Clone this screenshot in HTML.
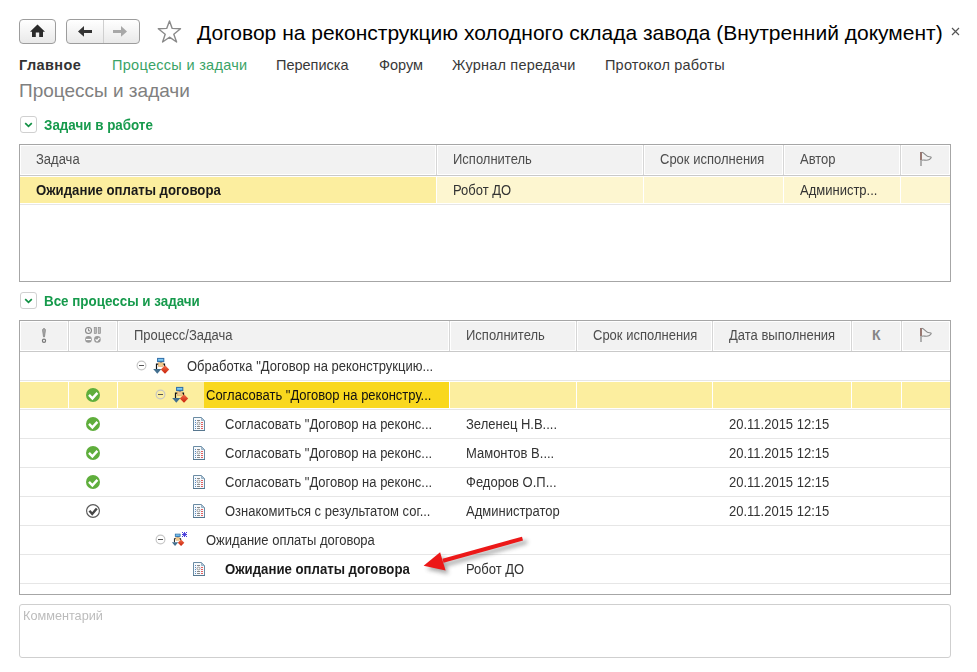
<!DOCTYPE html>
<html><head><meta charset="utf-8">
<style>
html,body{margin:0;padding:0;background:#fff;width:977px;height:672px;overflow:hidden;position:relative;font-family:"Liberation Sans",sans-serif;}
.a{position:absolute;}
.t{position:absolute;white-space:nowrap;font-size:13px;line-height:13px;color:#333;}
.btn{position:absolute;box-sizing:border-box;border:1px solid #9d9d9d;border-radius:4px;background:linear-gradient(#fff,#e9e9e9);}
svg{position:absolute;overflow:visible;}
</style></head>
<body>

<div class="btn" style="left:19px;top:19px;width:37px;height:25px;"></div>
<div class="btn" style="left:66px;top:19px;width:74px;height:25px;"></div>
<div class="a" style="left:103px;top:20px;width:1px;height:23px;background:#cfcfcf;"></div>
<svg style="left:0;top:0" width="977" height="60">
  <path d="M37.5 24.5 L45 31.8 L43 31.8 L43 37 L39.2 37 L39.2 32.6 L35.8 32.6 L35.8 37 L32 37 L32 31.8 L30 31.8 Z" fill="#2b2b2b"/>
  <path d="M78 31.4 L84 26 L84 30 L92 30 L92 33 L84 33 L84 36.8 Z" fill="#333"/>
  <path d="M127 31.4 L121 26 L121 30 L113 30 L113 33 L121 33 L121 36.8 Z" fill="#a8a8a8"/>
  <path d="M169.5 21 L172.2 28.4 L180.5 28.8 L173.8 34.2 L176.6 42 L169.5 37.2 L162.6 42 L165.2 34.2 L158.3 28.8 L166.7 28.4 Z" fill="none" stroke="#8a8a8a" stroke-width="1.4" stroke-linejoin="round"/>
  <path d="M952 28 L959 35 M959 28 L952 35" stroke="#555" stroke-width="1.2"/>
</svg>
<div class="t" style="left:197px;top:22.41px;font-size:21px;line-height:21px;color:#000;">Договор на реконструкцию холодного склада завода (Внутренний документ)</div>
<div class="t" style="left:19px;top:57.72px;font-size:14.5px;line-height:14.5px;color:#333;font-weight:bold;letter-spacing:0.4px;">Главное</div>
<div class="t" style="left:112px;top:57.72px;font-size:14.5px;line-height:14.5px;color:#3aa366;letter-spacing:0.3px;">Процессы и задачи</div>
<div class="t" style="left:276px;top:57.72px;font-size:14.5px;line-height:14.5px;color:#383838;">Переписка</div>
<div class="t" style="left:379px;top:57.72px;font-size:14.5px;line-height:14.5px;color:#383838;">Форум</div>
<div class="t" style="left:452px;top:57.72px;font-size:14.5px;line-height:14.5px;color:#383838;letter-spacing:0.2px;">Журнал передачи</div>
<div class="t" style="left:605px;top:57.72px;font-size:14.5px;line-height:14.5px;color:#383838;letter-spacing:0.2px;">Протокол работы</div>
<div class="t" style="left:19px;top:81.21px;font-size:19px;line-height:19px;color:#808080;">Процессы и задачи</div>
<div class="a" style="left:20px;top:116px;width:17px;height:17px;box-sizing:border-box;border:1px solid #d0d0d0;border-radius:3px;"></div>
<svg style="left:0;top:0" width="10" height="10"><path d="M25.2 123.2 L28.5 126.3 L31.8 123.2" fill="none" stroke="#119044" stroke-width="1.7"/></svg>
<div class="t" style="left:44px;top:118.65px;font-size:13.4px;line-height:13.4px;color:#169a4c;font-weight:bold;transform:scaleY(1.07);transform-origin:0 84.7%;">Задачи в работе</div>
<div class="a" style="left:20px;top:292px;width:17px;height:17px;box-sizing:border-box;border:1px solid #d0d0d0;border-radius:3px;"></div>
<svg style="left:0;top:0" width="10" height="10"><path d="M25.2 299.2 L28.5 302.3 L31.8 299.2" fill="none" stroke="#119044" stroke-width="1.7"/></svg>
<div class="t" style="left:44px;top:294.65px;font-size:13.4px;line-height:13.4px;color:#169a4c;font-weight:bold;transform:scaleY(1.07);transform-origin:0 84.7%;">Все процессы и задачи</div>
<div class="a" style="left:19px;top:144px;width:932px;height:138px;box-sizing:border-box;border:1px solid #a6a6a6;"></div>
<div class="a" style="left:21px;top:146px;width:414px;height:28px;background:#f2f2f2;"></div>
<div class="a" style="left:438px;top:146px;width:204px;height:28px;background:#f2f2f2;"></div>
<div class="a" style="left:645px;top:146px;width:137px;height:28px;background:#f2f2f2;"></div>
<div class="a" style="left:785px;top:146px;width:114px;height:28px;background:#f2f2f2;"></div>
<div class="a" style="left:902px;top:146px;width:47px;height:28px;background:#f2f2f2;"></div>
<div class="a" style="left:436px;top:145px;width:1px;height:30px;background:#d6d6d6;"></div>
<div class="a" style="left:643px;top:145px;width:1px;height:30px;background:#d6d6d6;"></div>
<div class="a" style="left:783px;top:145px;width:1px;height:30px;background:#d6d6d6;"></div>
<div class="a" style="left:900px;top:145px;width:1px;height:30px;background:#d6d6d6;"></div>
<div class="a" style="left:20px;top:175px;width:930px;height:1px;background:#c9c9c9;"></div>
<div class="a" style="left:20px;top:177px;width:416px;height:26px;background:#fcee9f;"></div>
<div class="a" style="left:437px;top:177px;width:206px;height:26px;background:#fdf6d0;"></div>
<div class="a" style="left:644px;top:177px;width:139px;height:26px;background:#fdf6d0;"></div>
<div class="a" style="left:784px;top:177px;width:116px;height:26px;background:#fdf6d0;"></div>
<div class="a" style="left:901px;top:177px;width:49px;height:26px;background:#fdf6d0;"></div>
<div class="a" style="left:20px;top:204px;width:930px;height:1px;background:#e6e6e6;"></div>
<div class="t" style="left:36px;top:152.79px;font-size:13px;line-height:13px;color:#4d4d4d;transform:scaleY(1.07);transform-origin:0 84.7%;">Задача</div>
<div class="t" style="left:453px;top:152.79px;font-size:13px;line-height:13px;color:#4d4d4d;transform:scaleY(1.07);transform-origin:0 84.7%;">Исполнитель</div>
<div class="t" style="left:660px;top:152.79px;font-size:13px;line-height:13px;color:#4d4d4d;transform:scaleY(1.07);transform-origin:0 84.7%;">Срок исполнения</div>
<div class="t" style="left:800px;top:152.79px;font-size:13px;line-height:13px;color:#4d4d4d;transform:scaleY(1.07);transform-origin:0 84.7%;">Автор</div>
<div class="t" style="left:36px;top:183.62px;font-size:13.2px;line-height:13.2px;color:#1a1a1a;font-weight:bold;transform:scaleY(1.07);transform-origin:0 84.7%;">Ожидание оплаты договора</div>
<div class="t" style="left:453px;top:183.79px;font-size:13px;line-height:13px;color:#333;transform:scaleY(1.07);transform-origin:0 84.7%;">Робот ДО</div>
<div class="t" style="left:800px;top:183.79px;font-size:13px;line-height:13px;color:#333;transform:scaleY(1.07);transform-origin:0 84.7%;">Администр...</div>
<svg style="left:0;top:0" width="10" height="10">
<path d="M921.0 152 L921.0 166" stroke="#8a8a8a" stroke-width="1.3"/>
<path d="M921.0 152 L921.0 160" stroke="#8b5a50" stroke-width="1.3"/>
<path d="M921.8 152.3 C924.3 152.5 926.3 157 929.3 156.8 C932.3 156.6 931.3 158 929.3 159.5 C926.8 161 924.3 159.6 921.8 160.2" fill="none" stroke="#8a8a8a" stroke-width="1.1"/>
</svg>
<div class="a" style="left:19px;top:320px;width:932px;height:275px;box-sizing:border-box;border:1px solid #a6a6a6;"></div>
<div class="a" style="left:21px;top:322px;width:46px;height:28px;background:#f2f2f2;"></div>
<div class="a" style="left:70px;top:322px;width:46px;height:28px;background:#f2f2f2;"></div>
<div class="a" style="left:119px;top:322px;width:329px;height:28px;background:#f2f2f2;"></div>
<div class="a" style="left:451px;top:322px;width:124px;height:28px;background:#f2f2f2;"></div>
<div class="a" style="left:578px;top:322px;width:133px;height:28px;background:#f2f2f2;"></div>
<div class="a" style="left:714px;top:322px;width:136px;height:28px;background:#f2f2f2;"></div>
<div class="a" style="left:853px;top:322px;width:47px;height:28px;background:#f2f2f2;"></div>
<div class="a" style="left:903px;top:322px;width:46px;height:28px;background:#f2f2f2;"></div>
<div class="a" style="left:68px;top:321px;width:1px;height:30px;background:#d6d6d6;"></div>
<div class="a" style="left:117px;top:321px;width:1px;height:30px;background:#d6d6d6;"></div>
<div class="a" style="left:449px;top:321px;width:1px;height:30px;background:#d6d6d6;"></div>
<div class="a" style="left:576px;top:321px;width:1px;height:30px;background:#d6d6d6;"></div>
<div class="a" style="left:712px;top:321px;width:1px;height:30px;background:#d6d6d6;"></div>
<div class="a" style="left:851px;top:321px;width:1px;height:30px;background:#d6d6d6;"></div>
<div class="a" style="left:901px;top:321px;width:1px;height:30px;background:#d6d6d6;"></div>
<div class="a" style="left:20px;top:351px;width:930px;height:1px;background:#c9c9c9;"></div>
<div class="t" style="left:134px;top:328.99px;font-size:13px;line-height:13px;color:#4d4d4d;transform:scaleY(1.07);transform-origin:0 84.7%;">Процесс/Задача</div>
<div class="t" style="left:466px;top:328.99px;font-size:13px;line-height:13px;color:#4d4d4d;transform:scaleY(1.07);transform-origin:0 84.7%;">Исполнитель</div>
<div class="t" style="left:593px;top:328.99px;font-size:13px;line-height:13px;color:#4d4d4d;transform:scaleY(1.07);transform-origin:0 84.7%;">Срок исполнения</div>
<div class="t" style="left:729px;top:328.99px;font-size:13px;line-height:13px;color:#4d4d4d;transform:scaleY(1.07);transform-origin:0 84.7%;">Дата выполнения</div>
<div class="t" style="left:872px;top:328.14px;font-size:14px;line-height:14px;color:#858585;font-weight:bold;">К</div>
<svg style="left:0;top:0" width="10" height="10">
<path d="M921.0 328 L921.0 342" stroke="#8a8a8a" stroke-width="1.3"/>
<path d="M921.0 328 L921.0 336" stroke="#8b5a50" stroke-width="1.3"/>
<path d="M921.8 328.3 C924.3 328.5 926.3 333 929.3 332.8 C932.3 332.6 931.3 334 929.3 335.5 C926.8 337 924.3 335.6 921.8 336.2" fill="none" stroke="#8a8a8a" stroke-width="1.1"/>
</svg>
<div class="a" style="left:20px;top:380px;width:930px;height:1px;background:#e6e6e6;"></div>
<div class="a" style="left:20px;top:409px;width:930px;height:1px;background:#e6e6e6;"></div>
<div class="a" style="left:20px;top:438px;width:930px;height:1px;background:#e6e6e6;"></div>
<div class="a" style="left:20px;top:467px;width:930px;height:1px;background:#e6e6e6;"></div>
<div class="a" style="left:20px;top:496px;width:930px;height:1px;background:#e6e6e6;"></div>
<div class="a" style="left:20px;top:525px;width:930px;height:1px;background:#e6e6e6;"></div>
<div class="a" style="left:20px;top:554px;width:930px;height:1px;background:#e6e6e6;"></div>
<div class="a" style="left:20px;top:583px;width:930px;height:1px;background:#e6e6e6;"></div>
<div class="a" style="left:20px;top:382px;width:48px;height:26px;background:#fcee9f;"></div>
<div class="a" style="left:69px;top:382px;width:48px;height:26px;background:#fcee9f;"></div>
<div class="a" style="left:118px;top:382px;width:331px;height:26px;background:#fcee9f;"></div>
<div class="a" style="left:450px;top:382px;width:126px;height:26px;background:#fcee9f;"></div>
<div class="a" style="left:577px;top:382px;width:135px;height:26px;background:#fcee9f;"></div>
<div class="a" style="left:713px;top:382px;width:138px;height:26px;background:#fcee9f;"></div>
<div class="a" style="left:852px;top:382px;width:49px;height:26px;background:#fcee9f;"></div>
<div class="a" style="left:902px;top:382px;width:48px;height:26px;background:#fcee9f;"></div>
<div class="a" style="left:204px;top:382px;width:245px;height:26px;background:#f9d81e;"></div>
<svg style="left:0;top:0" width="10" height="10">
<path d="M44 328.6 C42.7 328.6 42.5 329.5 42.7 331 L43.5 336.8 L44.5 336.8 L45.3 331 C45.5 329.5 45.3 328.6 44 328.6 Z" fill="#aaa" stroke="#777" stroke-width="0.7"/>
<circle cx="44" cy="340.8" r="1.6" fill="none" stroke="#777" stroke-width="1.2"/>
<circle cx="88.5" cy="330.5" r="3" fill="none" stroke="#888" stroke-width="1.1"/>
<path d="M88.5 328.5 L88.5 330.8 L90 330.8" fill="none" stroke="#888" stroke-width="1"/>
<rect x="94.2" y="327.4" width="2.4" height="6.2" fill="#bbb" stroke="#888" stroke-width="0.6"/>
<rect x="98.2" y="327.4" width="2.4" height="6.2" fill="#bbb" stroke="#888" stroke-width="0.6"/>
<circle cx="88.5" cy="339.4" r="3.3" fill="#999"/>
<rect x="86" y="338.9" width="5" height="1.2" fill="#fff"/>
<circle cx="97.4" cy="339.4" r="3.3" fill="#999"/>
<path d="M95.6 339.3 L97 340.8 L99.4 338" fill="none" stroke="#fff" stroke-width="1.2"/>
</svg>
<svg style="left:0;top:0" width="10" height="10"><circle cx="141.5" cy="365.5" r="4.4" fill="none" stroke="#c6c6c6" stroke-width="1.15"/><rect x="139.0" y="365.0" width="5" height="1" fill="#555"/></svg>
<svg style="left:0;top:0" width="10" height="10"><defs>
<linearGradient id="rd" x1="0" y1="0" x2="0" y2="1"><stop offset="0" stop-color="#f0704a"/><stop offset="1" stop-color="#c81e08"/></linearGradient>
<linearGradient id="bl" x1="0" y1="0" x2="0" y2="1"><stop offset="0" stop-color="#9ad8fa"/><stop offset="1" stop-color="#4aa8e0"/></linearGradient>
</defs><g transform="translate(153,357.5) scale(1.0)">
<path d="M3.5 11.5 L3.5 6.6 L11.5 6.6 L11.5 9" fill="none" stroke="#111" stroke-width="1.2"/>
<rect x="4.6" y="0.9" width="6.2" height="3.2" fill="url(#bl)" stroke="#2c6aa6" stroke-width="1"/>
<rect x="6.8" y="4.3" width="2.2" height="1.2" fill="#2c6aa6"/>
<rect x="5.3" y="5.3" width="4.8" height="3.6" fill="#f1c88e" stroke="#d8a868" stroke-width="0.6"/>
<path d="M0.2 11.4 L8.4 11.4 L4.3 16.3 Z" fill="#426f8f"/>
<path d="M12 7.8 L16.2 12 L12 16.3 L7.8 12 Z" fill="url(#rd)"/>
</g></svg>
<div class="t" style="left:187px;top:359.99px;font-size:13px;line-height:13px;color:#333;transform:scaleY(1.07);transform-origin:0 84.7%;">Обработка "Договор на реконструкцию...</div>
<svg style="left:0;top:0" width="10" height="10"><circle cx="93" cy="395" r="7" fill="#5fae3c"/><path d="M89 394.9 L92.4 398.4 L97.4 392.9" fill="none" stroke="#fff" stroke-width="2.4"/></svg>
<svg style="left:0;top:0" width="10" height="10"><circle cx="160.5" cy="394.5" r="4.4" fill="none" stroke="#c6c6c6" stroke-width="1.15"/><rect x="158.0" y="394.0" width="5" height="1" fill="#555"/></svg>
<svg style="left:0;top:0" width="10" height="10"><defs>
<linearGradient id="rd" x1="0" y1="0" x2="0" y2="1"><stop offset="0" stop-color="#f0704a"/><stop offset="1" stop-color="#c81e08"/></linearGradient>
<linearGradient id="bl" x1="0" y1="0" x2="0" y2="1"><stop offset="0" stop-color="#9ad8fa"/><stop offset="1" stop-color="#4aa8e0"/></linearGradient>
</defs><g transform="translate(172,386.5) scale(1.0)">
<path d="M3.5 11.5 L3.5 6.6 L11.5 6.6 L11.5 9" fill="none" stroke="#111" stroke-width="1.2"/>
<rect x="4.6" y="0.9" width="6.2" height="3.2" fill="url(#bl)" stroke="#2c6aa6" stroke-width="1"/>
<rect x="6.8" y="4.3" width="2.2" height="1.2" fill="#2c6aa6"/>
<rect x="5.3" y="5.3" width="4.8" height="3.6" fill="#f1c88e" stroke="#d8a868" stroke-width="0.6"/>
<path d="M0.2 11.4 L8.4 11.4 L4.3 16.3 Z" fill="#426f8f"/>
<path d="M12 7.8 L16.2 12 L12 16.3 L7.8 12 Z" fill="url(#rd)"/>
</g></svg>
<div class="t" style="left:206px;top:388.99px;font-size:13px;line-height:13px;color:#111;transform:scaleY(1.07);transform-origin:0 84.7%;">Согласовать "Договор на реконстру...</div>
<svg style="left:0;top:0" width="10" height="10"><circle cx="93" cy="424" r="7" fill="#5fae3c"/><path d="M89 423.9 L92.4 427.4 L97.4 421.9" fill="none" stroke="#fff" stroke-width="2.4"/></svg>
<svg style="left:0;top:0" width="10" height="10">
<path d="M193.5 417.5 L201.5 417.5 L204.5 420.5 L204.5 430.5 L193.5 430.5 Z" fill="#f6f9fc" stroke="#6a8ba3" stroke-width="1"/>
<rect x="193" y="430" width="12" height="1" fill="#57778f"/>
<path d="M201.5 417.8 L201.5 420.5 L204.2 420.5 Z" fill="#b8cfe0" stroke="#8aa6bb" stroke-width="0.8"/>
<rect x="195" y="420" width="1" height="1" fill="#5a8ac0"/><rect x="197" y="420" width="3" height="1" fill="#888"/><rect x="195" y="422" width="1" height="1" fill="#5a8ac0"/><rect x="201" y="422" width="2" height="1" fill="#e06060"/><rect x="195" y="424" width="1" height="1" fill="#5a8ac0"/><rect x="201" y="424" width="2" height="1" fill="#e06060"/><rect x="195" y="426" width="1" height="1" fill="#5a8ac0"/><rect x="197" y="426" width="3" height="1" fill="#888"/><rect x="201" y="426" width="2" height="1" fill="#e06060"/><rect x="195" y="428" width="1" height="1" fill="#5a8ac0"/><rect x="197" y="428" width="3" height="1" fill="#888"/><rect x="201" y="428" width="2" height="1" fill="#e06060"/><circle cx="198.5" cy="423.5" r="1.4" fill="none" stroke="#999" stroke-width="1"/>
</svg>
<div class="t" style="left:225px;top:417.99px;font-size:13px;line-height:13px;color:#333;transform:scaleY(1.07);transform-origin:0 84.7%;">Согласовать "Договор на реконс...</div>
<div class="t" style="left:466px;top:417.99px;font-size:13px;line-height:13px;color:#333;transform:scaleY(1.07);transform-origin:0 84.7%;">Зеленец Н.В....</div>
<div class="t" style="left:729px;top:417.99px;font-size:13px;line-height:13px;color:#333;transform:scaleY(1.07);transform-origin:0 84.7%;">20.11.2015 12:15</div>
<svg style="left:0;top:0" width="10" height="10"><circle cx="93" cy="453" r="7" fill="#5fae3c"/><path d="M89 452.9 L92.4 456.4 L97.4 450.9" fill="none" stroke="#fff" stroke-width="2.4"/></svg>
<svg style="left:0;top:0" width="10" height="10">
<path d="M193.5 446.5 L201.5 446.5 L204.5 449.5 L204.5 459.5 L193.5 459.5 Z" fill="#f6f9fc" stroke="#6a8ba3" stroke-width="1"/>
<rect x="193" y="459" width="12" height="1" fill="#57778f"/>
<path d="M201.5 446.8 L201.5 449.5 L204.2 449.5 Z" fill="#b8cfe0" stroke="#8aa6bb" stroke-width="0.8"/>
<rect x="195" y="449" width="1" height="1" fill="#5a8ac0"/><rect x="197" y="449" width="3" height="1" fill="#888"/><rect x="195" y="451" width="1" height="1" fill="#5a8ac0"/><rect x="201" y="451" width="2" height="1" fill="#e06060"/><rect x="195" y="453" width="1" height="1" fill="#5a8ac0"/><rect x="201" y="453" width="2" height="1" fill="#e06060"/><rect x="195" y="455" width="1" height="1" fill="#5a8ac0"/><rect x="197" y="455" width="3" height="1" fill="#888"/><rect x="201" y="455" width="2" height="1" fill="#e06060"/><rect x="195" y="457" width="1" height="1" fill="#5a8ac0"/><rect x="197" y="457" width="3" height="1" fill="#888"/><rect x="201" y="457" width="2" height="1" fill="#e06060"/><circle cx="198.5" cy="452.5" r="1.4" fill="none" stroke="#999" stroke-width="1"/>
</svg>
<div class="t" style="left:225px;top:446.99px;font-size:13px;line-height:13px;color:#333;transform:scaleY(1.07);transform-origin:0 84.7%;">Согласовать "Договор на реконс...</div>
<div class="t" style="left:466px;top:446.99px;font-size:13px;line-height:13px;color:#333;transform:scaleY(1.07);transform-origin:0 84.7%;">Мамонтов В....</div>
<div class="t" style="left:729px;top:446.99px;font-size:13px;line-height:13px;color:#333;transform:scaleY(1.07);transform-origin:0 84.7%;">20.11.2015 12:15</div>
<svg style="left:0;top:0" width="10" height="10"><circle cx="93" cy="482" r="7" fill="#5fae3c"/><path d="M89 481.9 L92.4 485.4 L97.4 479.9" fill="none" stroke="#fff" stroke-width="2.4"/></svg>
<svg style="left:0;top:0" width="10" height="10">
<path d="M193.5 475.5 L201.5 475.5 L204.5 478.5 L204.5 488.5 L193.5 488.5 Z" fill="#f6f9fc" stroke="#6a8ba3" stroke-width="1"/>
<rect x="193" y="488" width="12" height="1" fill="#57778f"/>
<path d="M201.5 475.8 L201.5 478.5 L204.2 478.5 Z" fill="#b8cfe0" stroke="#8aa6bb" stroke-width="0.8"/>
<rect x="195" y="478" width="1" height="1" fill="#5a8ac0"/><rect x="197" y="478" width="3" height="1" fill="#888"/><rect x="195" y="480" width="1" height="1" fill="#5a8ac0"/><rect x="201" y="480" width="2" height="1" fill="#e06060"/><rect x="195" y="482" width="1" height="1" fill="#5a8ac0"/><rect x="201" y="482" width="2" height="1" fill="#e06060"/><rect x="195" y="484" width="1" height="1" fill="#5a8ac0"/><rect x="197" y="484" width="3" height="1" fill="#888"/><rect x="201" y="484" width="2" height="1" fill="#e06060"/><rect x="195" y="486" width="1" height="1" fill="#5a8ac0"/><rect x="197" y="486" width="3" height="1" fill="#888"/><rect x="201" y="486" width="2" height="1" fill="#e06060"/><circle cx="198.5" cy="481.5" r="1.4" fill="none" stroke="#999" stroke-width="1"/>
</svg>
<div class="t" style="left:225px;top:475.99px;font-size:13px;line-height:13px;color:#333;transform:scaleY(1.07);transform-origin:0 84.7%;">Согласовать "Договор на реконс...</div>
<div class="t" style="left:466px;top:475.99px;font-size:13px;line-height:13px;color:#333;transform:scaleY(1.07);transform-origin:0 84.7%;">Федоров О.П...</div>
<div class="t" style="left:729px;top:475.99px;font-size:13px;line-height:13px;color:#333;transform:scaleY(1.07);transform-origin:0 84.7%;">20.11.2015 12:15</div>
<svg style="left:0;top:0" width="10" height="10"><circle cx="93" cy="511" r="6.4" fill="#fff" stroke="#5a5a5a" stroke-width="1.15"/><path d="M89.4 510.8 L92.2 513.9 L96.8 508.4" fill="none" stroke="#444" stroke-width="2.4"/></svg>
<svg style="left:0;top:0" width="10" height="10">
<path d="M193.5 504.5 L201.5 504.5 L204.5 507.5 L204.5 517.5 L193.5 517.5 Z" fill="#f6f9fc" stroke="#6a8ba3" stroke-width="1"/>
<rect x="193" y="517" width="12" height="1" fill="#57778f"/>
<path d="M201.5 504.8 L201.5 507.5 L204.2 507.5 Z" fill="#b8cfe0" stroke="#8aa6bb" stroke-width="0.8"/>
<rect x="195" y="507" width="1" height="1" fill="#5a8ac0"/><rect x="197" y="507" width="3" height="1" fill="#888"/><rect x="195" y="509" width="1" height="1" fill="#5a8ac0"/><rect x="201" y="509" width="2" height="1" fill="#e06060"/><rect x="195" y="511" width="1" height="1" fill="#5a8ac0"/><rect x="201" y="511" width="2" height="1" fill="#e06060"/><rect x="195" y="513" width="1" height="1" fill="#5a8ac0"/><rect x="197" y="513" width="3" height="1" fill="#888"/><rect x="201" y="513" width="2" height="1" fill="#e06060"/><rect x="195" y="515" width="1" height="1" fill="#5a8ac0"/><rect x="197" y="515" width="3" height="1" fill="#888"/><rect x="201" y="515" width="2" height="1" fill="#e06060"/><circle cx="198.5" cy="510.5" r="1.4" fill="none" stroke="#999" stroke-width="1"/>
</svg>
<div class="t" style="left:225px;top:504.99px;font-size:13px;line-height:13px;color:#333;transform:scaleY(1.07);transform-origin:0 84.7%;">Ознакомиться с результатом сог...</div>
<div class="t" style="left:466px;top:504.99px;font-size:13px;line-height:13px;color:#333;transform:scaleY(1.07);transform-origin:0 84.7%;">Администратор</div>
<div class="t" style="left:729px;top:504.99px;font-size:13px;line-height:13px;color:#333;transform:scaleY(1.07);transform-origin:0 84.7%;">20.11.2015 12:15</div>
<svg style="left:0;top:0" width="10" height="10"><circle cx="160.5" cy="539.5" r="4.4" fill="none" stroke="#c6c6c6" stroke-width="1.15"/><rect x="158.0" y="539.0" width="5" height="1" fill="#555"/></svg>
<svg style="left:0;top:0" width="10" height="10"><defs>
<linearGradient id="rd" x1="0" y1="0" x2="0" y2="1"><stop offset="0" stop-color="#f0704a"/><stop offset="1" stop-color="#c81e08"/></linearGradient>
<linearGradient id="bl" x1="0" y1="0" x2="0" y2="1"><stop offset="0" stop-color="#9ad8fa"/><stop offset="1" stop-color="#4aa8e0"/></linearGradient>
</defs><g transform="translate(171.7,533.4) scale(0.78)">
<path d="M3.5 11.5 L3.5 6.6 L11.5 6.6 L11.5 9" fill="none" stroke="#111" stroke-width="1.2"/>
<rect x="4.6" y="0.9" width="6.2" height="3.2" fill="url(#bl)" stroke="#2c6aa6" stroke-width="1"/>
<rect x="6.8" y="4.3" width="2.2" height="1.2" fill="#2c6aa6"/>
<rect x="5.3" y="5.3" width="4.8" height="3.6" fill="#f1c88e" stroke="#d8a868" stroke-width="0.6"/>
<path d="M0.2 11.4 L8.4 11.4 L4.3 16.3 Z" fill="#426f8f"/>
<path d="M12 7.8 L16.2 12 L12 16.3 L7.8 12 Z" fill="url(#rd)"/>
</g></svg>
<svg style="left:0;top:0" width="10" height="10"><g fill="#4a3fd8">
<rect x="182" y="532" width="1" height="1"/><rect x="184" y="532" width="1" height="1"/><rect x="186" y="532" width="1" height="1"/>
<rect x="183" y="533" width="3" height="3" fill="#6a60e8"/><rect x="184" y="533" width="1" height="3"/><rect x="183" y="534" width="3" height="1"/>
<rect x="182" y="534" width="1" height="1"/><rect x="186" y="534" width="1" height="1"/>
<rect x="182" y="536" width="1" height="1"/><rect x="184" y="536" width="1" height="1"/><rect x="186" y="536" width="1" height="1"/>
</g></svg>
<div class="t" style="left:206px;top:533.99px;font-size:13px;line-height:13px;color:#333;transform:scaleY(1.07);transform-origin:0 84.7%;">Ожидание оплаты договора</div>
<svg style="left:0;top:0" width="10" height="10">
<path d="M193.5 562.5 L201.5 562.5 L204.5 565.5 L204.5 575.5 L193.5 575.5 Z" fill="#f6f9fc" stroke="#6a8ba3" stroke-width="1"/>
<rect x="193" y="575" width="12" height="1" fill="#57778f"/>
<path d="M201.5 562.8 L201.5 565.5 L204.2 565.5 Z" fill="#b8cfe0" stroke="#8aa6bb" stroke-width="0.8"/>
<rect x="195" y="565" width="1" height="1" fill="#5a8ac0"/><rect x="197" y="565" width="3" height="1" fill="#888"/><rect x="195" y="567" width="1" height="1" fill="#5a8ac0"/><rect x="201" y="567" width="2" height="1" fill="#e06060"/><rect x="195" y="569" width="1" height="1" fill="#5a8ac0"/><rect x="201" y="569" width="2" height="1" fill="#e06060"/><rect x="195" y="571" width="1" height="1" fill="#5a8ac0"/><rect x="197" y="571" width="3" height="1" fill="#888"/><rect x="201" y="571" width="2" height="1" fill="#e06060"/><rect x="195" y="573" width="1" height="1" fill="#5a8ac0"/><rect x="197" y="573" width="3" height="1" fill="#888"/><rect x="201" y="573" width="2" height="1" fill="#e06060"/><circle cx="198.5" cy="568.5" r="1.4" fill="none" stroke="#999" stroke-width="1"/>
</svg>
<div class="t" style="left:225px;top:562.82px;font-size:13.2px;line-height:13.2px;color:#1a1a1a;font-weight:bold;transform:scaleY(1.07);transform-origin:0 84.7%;">Ожидание оплаты договора</div>
<div class="t" style="left:466px;top:562.99px;font-size:13px;line-height:13px;color:#333;transform:scaleY(1.07);transform-origin:0 84.7%;">Робот ДО</div>
<svg style="left:0;top:0" width="977" height="672">
<defs><filter id="sh" x="-20%" y="-50%" width="140%" height="200%"><feGaussianBlur stdDeviation="2"/></filter></defs>
<g transform="translate(3,3.5)" opacity="0.42" filter="url(#sh)">
<path d="M522.5 538.6 L443 560.8" stroke="#333" stroke-width="4" stroke-linecap="round"/>
<path d="M423.6 565.8 L440.1 552.2 L445.6 570.6 Z" fill="#333"/>
</g>
<path d="M522.5 538.6 L443 560.8" stroke="#ec1818" stroke-width="4" stroke-linecap="butt"/>
<path d="M423.6 565.8 L440.1 552.2 L445.6 570.6 Z" fill="#ec1818"/>
</svg>
<div class="a" style="left:19px;top:604px;width:932px;height:54px;box-sizing:border-box;border:1px solid #cfcfcf;border-radius:3px;"></div>
<div class="t" style="left:23px;top:610.24px;font-size:12.7px;line-height:12.7px;color:#bcbcbc;transform:scaleY(1.07);transform-origin:0 84.7%;">Комментарий</div>
</body></html>
